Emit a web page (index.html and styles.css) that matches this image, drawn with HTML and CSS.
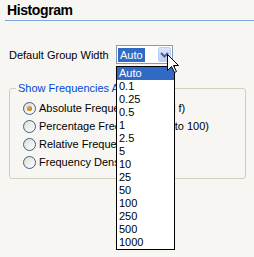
FILE: index.html
```html
<!DOCTYPE html>
<html lang="en">
<head>
    <meta charset="UTF-8">
    <title>Histogram</title>
    <link rel="stylesheet" href="styles.css">
</head>
<body>
    <div class="panel">
        <h1 class="title">Histogram</h1>

        <div class="field-row">
            <label class="field-label">Default Group Width</label>
            <div class="combo">
                <span class="combo-value"><span class="combo-sel">Auto</span></span>
                <span class="combo-btn">
                    <svg width="9" height="6" viewBox="0 0 9 6">
                        <path d="M1 1 L4.5 4.5 L8 1" fill="none" stroke="#4d6185" stroke-width="2"/>
                    </svg>
                </span>
                <ul class="combo-list">
                    <li class="active">Auto</li>
                    <li>0.1</li>
                    <li>0.25</li>
                    <li>0.5</li>
                    <li>1</li>
                    <li>2.5</li>
                    <li>5</li>
                    <li>10</li>
                    <li>25</li>
                    <li>50</li>
                    <li>100</li>
                    <li>250</li>
                    <li>500</li>
                    <li>1000</li>
                </ul>
                <svg class="cursor" width="13" height="20" viewBox="0 0 13 20">
                    <path d="M0.5 0.5 L0.5 16.5 L4.5 12.5 L7.5 18.5 L9.5 17.5 L6.5 11.5 L11.5 11.5 Z" fill="#fff" stroke="#000" stroke-width="1"/>
                </svg>
            </div>
        </div>

        <fieldset class="group">
            <legend>Show Frequencies As</legend>
            <label class="radio"><span class="radio-dot checked"></span>Absolute Frequencies (Total f)</label>
            <label class="radio"><span class="radio-dot"></span>Percentage Frequencies (0 to 100)</label>
            <label class="radio"><span class="radio-dot"></span>Relative Frequencies</label>
            <label class="radio"><span class="radio-dot"></span>Frequency Density</label>
        </fieldset>
    </div>
</body>
</html>
```

FILE: styles.css
```css
body {
    margin: 0;
    padding: 0;
    background-color: #f7f6f2;
    font-family: "Liberation Sans", Arial, sans-serif;
    font-size: 11px;
    color: #000;
}
.panel {
    width: 254px;
    height: 257px;
    overflow: hidden;
}
.title {
    margin: 0 0 0 5px;
    padding: 2px 0 0 2px;
    height: 18px;
    font-size: 14px;
    font-weight: bold;
    line-height: 17px;
    letter-spacing: -0.4px;
    border-bottom: 1px solid #7ea6e0;
}
.field-row {
    display: flex;
    align-items: center;
    margin-top: 24px;
    height: 19px;
}
.field-label {
    width: 107px;
    padding-left: 9px;
}
.combo {
    position: relative;
    display: flex;
    align-items: center;
    width: 55px;
    height: 17px;
    border: 1px solid #7f9db9;
    background-color: #fff;
}
.combo-value {
    flex: 1;
    padding-left: 1px;
}
.combo-sel {
    display: inline-block;
    padding: 0 2px;
    line-height: 14px;
    background-color: #316ac5;
    color: #fff;
}
.combo-btn {
    display: flex;
    align-items: center;
    justify-content: center;
    width: 13px;
    height: 15px;
    margin-right: 1px;
    border-radius: 2px;
    background: linear-gradient(#dce6fd, #bccffb);
    border: 1px solid #b9cdf7;
    box-sizing: border-box;
}
.combo-list {
    position: absolute;
    left: -1px;
    top: 20px;
    width: 57px;
    margin: 0;
    padding: 0;
    list-style: none;
    background-color: #fff;
    border: 1px solid #000;
    z-index: 2;
}
.combo-list li {
    height: 13px;
    line-height: 13px;
    padding-left: 2px;
}
.combo-list li.active {
    background-color: #316ac5;
    color: #fff;
}
.cursor {
    position: absolute;
    left: 50px;
    top: 8px;
    z-index: 3;
}
.group {
    margin: 18px 8px 0 9px;
    padding: 4px 0 7px 0;
    border: 1px solid #d0d0bf;
    border-radius: 3px;
}
.group legend {
    margin-left: 6px;
    padding: 0 2px;
    line-height: 13px;
    color: #0046d5;
    white-space: nowrap;
}
.radio {
    display: flex;
    align-items: center;
    height: 18px;
    padding-left: 13px;
    white-space: nowrap;
}
.radio-dot {
    width: 11px;
    height: 11px;
    margin-right: 3px;
    border: 1px solid #3d5f8a;
    border-radius: 50%;
    background: linear-gradient(135deg, #dcdcd7, #fff);
    display: flex;
    align-items: center;
    justify-content: center;
    flex-shrink: 0;
}
.radio-dot.checked::after {
    content: "";
    width: 5px;
    height: 5px;
    border-radius: 50%;
    background: radial-gradient(circle at 40% 40%, #e8b04a, #9a6a1c);
}
```
